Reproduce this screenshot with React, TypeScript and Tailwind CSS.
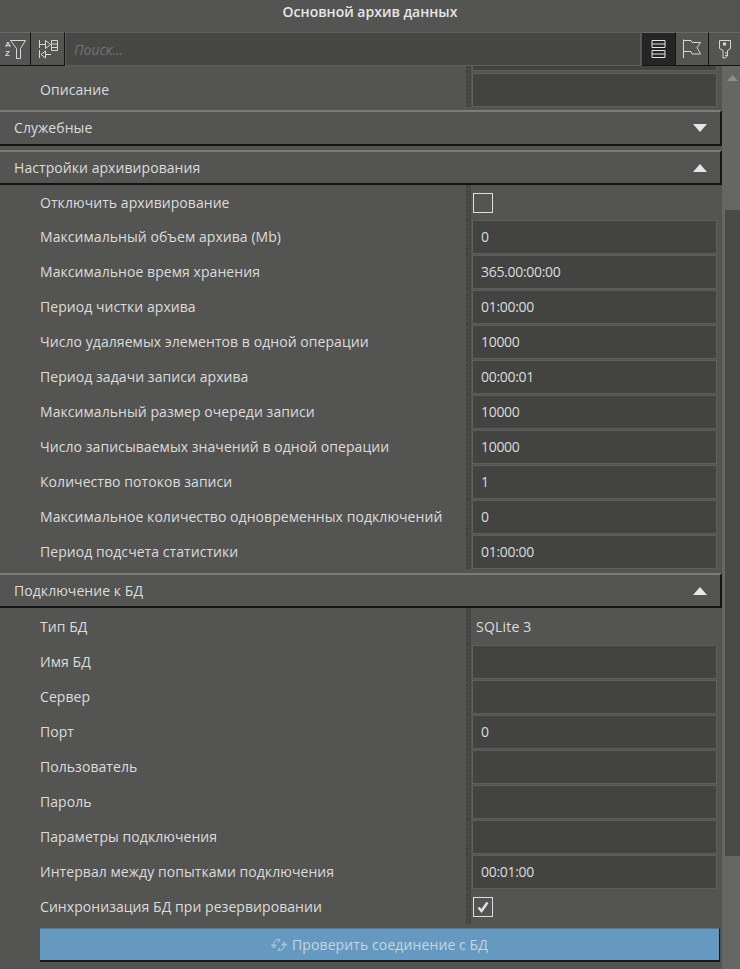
import type { ReactNode } from 'react';

const font = "font-['Open_Sans','Noto_Sans',sans-serif]";

function Splitter() {
  return (
    <div className="self-stretch flex w-[5px]">
      <div className="w-[3px] border-l-2 border-dotted border-[#3f3f3e] bg-[#4b4b4a]" />
      <div className="w-[2px] bg-[#454544]" />
    </div>
  );
}

function Row({ label, children, height = 'h-[35px]' }: { label: string; children?: ReactNode; height?: string }) {
  return (
    <div className={`flex items-center ${height}`}>
      <div className="w-[466px] pl-10 whitespace-nowrap text-[14px] text-[#dcdcdc] tracking-[0.06px]">{label}</div>
      <Splitter />
      <div className="pl-[1px] w-[251px] flex items-center">{children}</div>
    </div>
  );
}

function Field({ value }: { value?: string }) {
  return (
    <div className="h-[34px] w-[245px] border border-[#5e5e5d] bg-[#434342] pl-2 flex items-center text-[14px] text-[#dcdcdc] tracking-[-0.3px]">
      {value}
    </div>
  );
}

function Check({ checked }: { checked?: boolean }) {
  return (
    <div className="ml-[1px] h-5 w-5 border border-[#dedede] flex items-center justify-center">
      {checked && (
        <svg width="14" height="14" viewBox="0 0 14 14">
          <path d="M2.5 7.5 L5.5 11 L11.5 2.5" fill="none" stroke="#e4e4e4" strokeWidth="2.4" />
        </svg>
      )}
    </div>
  );
}

function Group({ title, open, className = 'h-[36px]' }: { title: string; open?: boolean; className?: string }) {
  return (
    <div className={`border-t-2 border-t-[#7b7b7a] border-b-2 border-b-[#141414] border-r-2 border-r-[#141414] flex items-center justify-between pl-[14px] pr-[13px] text-[14px] text-[#dcdcdc] tracking-[0.06px] ${className}`}>
      <span className="-mt-[1px]">{title}</span>
      <svg width="14" height="8" viewBox="0 0 14 8" className={open ? '' : 'rotate-180'}>
        <polygon points="7,0 14,8 0,8" fill="#e6e6e6" />
      </svg>
    </div>
  );
}

function ToolButton({ children, className = '' }: { children: ReactNode; className?: string }) {
  return (
    <div className={`h-[34px] flex items-center justify-center border-t border-t-[#6a6a69] border-b border-b-[#141414] ${className}`}>
      {children}
    </div>
  );
}

function SortIcon() {
  return (
    <svg width="21" height="20" viewBox="0 0 21 20" fill="none" stroke="#d6d6d6" strokeWidth="1">
      <text x="0" y="8" fontSize="8" fill="#d6d6d6" stroke="none" fontFamily="Liberation Sans" fontWeight="700">A</text>
      <text x="0" y="17" fontSize="8" fill="#d6d6d6" stroke="none" fontFamily="Liberation Sans" fontWeight="700">Z</text>
      <path d="M5.5 1.5 H20.5 L15.5 9.5 V19.5 H11.5 V9.5 Z" />
    </svg>
  );
}

function CategoryIcon() {
  return (
    <svg width="20" height="20" viewBox="0 0 20 20" fill="none" stroke="#d6d6d6" strokeWidth="1">
      <path d="M1.5 1 V9 M1.5 5.5 H7 M7.5 1.5 V9.5 L12.5 5.5 Z" />
      <path d="M13.5 1.5 H19.5 V11.5 H13.5 Z M13.5 5 H19.5 M13.5 8.5 H19.5" />
      <path d="M1.5 11 V19 M13 15.5 H7 M7.5 12 V19 L3 15.5 Z" />
    </svg>
  );
}

function ListIcon() {
  return (
    <svg width="15" height="20" viewBox="0 0 15 20" fill="none" stroke="#e4e4e4" strokeWidth="1">
      <path d="M1 1.5 H14 V8.5 H1 Z M1 5 H14" />
      <path d="M1 11.5 H14 V18.5 H1 Z M1 15 H14" />
    </svg>
  );
}

function FlagIcon() {
  return (
    <svg width="20" height="20" viewBox="0 0 20 20" fill="none" stroke="#d6d6d6" strokeWidth="1">
      <path d="M1.5 0.5 V19" />
      <path d="M1.5 1.5 H9 L10 3.5 H18.5 L15 8.5 L18.5 15 H10 L9 12.5 H1.5" />
    </svg>
  );
}

function KeyIcon() {
  return (
    <svg width="14" height="20" viewBox="0 0 14 20" fill="none" stroke="#d6d6d6" strokeWidth="1">
      <path d="M1.5 1.5 H12.5 V9.5 L9.5 11.5 V17 L7 19 H5 V11.5 L1.5 9.5 Z" />
      <rect x="5.5" y="4" width="2" height="2" fill="#d6d6d6" />
      <path d="M7 14 H9 M7 16.5 H9" />
    </svg>
  );
}

function RefreshIcon() {
  return (
    <svg width="16" height="16" viewBox="0 0 16 16" fill="none" stroke="#b9cfdf" strokeWidth="1">
      <path d="M3 9 C2 5 5 2 9 2.5 L7 5.5" />
      <path d="M13 7 C14 11 11 14 7 13.5 L9 10.5" />
      <path d="M0.5 8 H5 L3 11 Z M11 8 H15.5 L13 5 Z" />
    </svg>
  );
}

const archiveRows = [
  ['Максимальный объем архива (Mb)', '0'],
  ['Максимальное время хранения', '365.00:00:00'],
  ['Период чистки архива', '01:00:00'],
  ['Число удаляемых элементов в одной операции', '10000'],
  ['Период задачи записи архива', '00:00:01'],
  ['Максимальный размер очереди записи', '10000'],
  ['Число записываемых значений в одной операции', '10000'],
  ['Количество потоков записи', '1'],
  ['Максимальное количество одновременных подключений', '0'],
  ['Период подсчета статистики', '01:00:00'],
];

const dbRows = [
  ['Имя БД', ''],
  ['Сервер', ''],
  ['Порт', '0'],
  ['Пользователь', ''],
  ['Пароль', ''],
  ['Параметры подключения', ''],
  ['Интервал между попытками подключения', '00:01:00'],
];

export default function App() {
  return (
    <div className={`h-[969px] w-[740px] overflow-hidden bg-[#545453] flex flex-col ${font}`}>
      <div className="h-[32px] shrink-0 flex items-center justify-center pb-[10px] text-[14px] font-semibold text-[#e6e6e6]">
        Основной архив данных
      </div>

      {/* Toolbar */}
      <div className="flex h-[34px] shrink-0">
        <ToolButton className="w-[31px] border-r border-r-[#141414]"><SortIcon /></ToolButton>
        <ToolButton className="w-[34px] border-r border-r-[#141414]"><CategoryIcon /></ToolButton>
        <div className="w-[576px] h-[34px] bg-[#474746] border border-[#5e5e5d] pl-2 flex items-center text-[14px] italic text-[#737372]">
          Поиск...
        </div>
        <ToolButton className="ml-[1px] w-[34px] bg-[#252525] border-r border-r-[#141414]"><ListIcon /></ToolButton>
        <ToolButton className="w-[33px] border-r border-r-[#141414]"><FlagIcon /></ToolButton>
        <ToolButton className="w-[31px]"><KeyIcon /></ToolButton>
      </div>

      <div className="flex flex-1 min-h-0">
        <div className="w-[722px] shrink-0">
          <Row label="" height="h-[6px]">
            <div className="h-[5px] w-[245px] -mt-[1px] border border-t-0 border-[#5e5e5d] bg-[#434342]" />
          </Row>
          <Row label="Описание"><Field /></Row>

          <Group title="Служебные" className="mt-[3px] h-[36px]" />
          <Group title="Настройки архивирования" open className="mt-[4px] h-[35px]" />
          <Row label="Отключить архивирование"><Check /></Row>
          <div className="-mt-[1px]">
            {archiveRows.map(([label, value]) => (
              <Row key={label} label={label}><Field value={value} /></Row>
            ))}
          </div>

          <Group title="Подключение к БД" open className="mt-[4px] h-[35px]" />
          <Row label="Тип БД" height="h-[36px]">
            <span className="pl-[4px] text-[14px] text-[#dcdcdc] tracking-[0.2px]">SQLite 3</span>
          </Row>
          {dbRows.map(([label, value]) => (
            <Row key={label} label={label}><Field value={value} /></Row>
          ))}
          <Row label="Синхронизация БД при резервировании"><Check checked /></Row>

          <div className="ml-10 mt-[4px] h-[34px] w-[680px] bg-[#6699bf] border-t border-t-[#60717e] border-b-2 border-b-[#141a1f] border-r border-r-[#141a1f] flex items-center justify-center gap-[5px] text-[14px] text-[#c3d6e4] tracking-[0.1px]">
            <RefreshIcon />
            Проверить соединение с БД
          </div>
        </div>

        {/* Scrollbar */}
        <div className="w-[18px] shrink-0 bg-[#666665] flex flex-col">
          <svg width="11" height="6" viewBox="0 0 11 6" className="ml-[5px] mt-[9px] shrink-0">
            <polygon points="5.5,0 11,6 0,6" fill="#8d8d8c" />
          </svg>
          <div className="ml-[3px] mt-[129px] h-[646px] bg-[#4a4a49]" />
        </div>
      </div>
    </div>
  );
}
